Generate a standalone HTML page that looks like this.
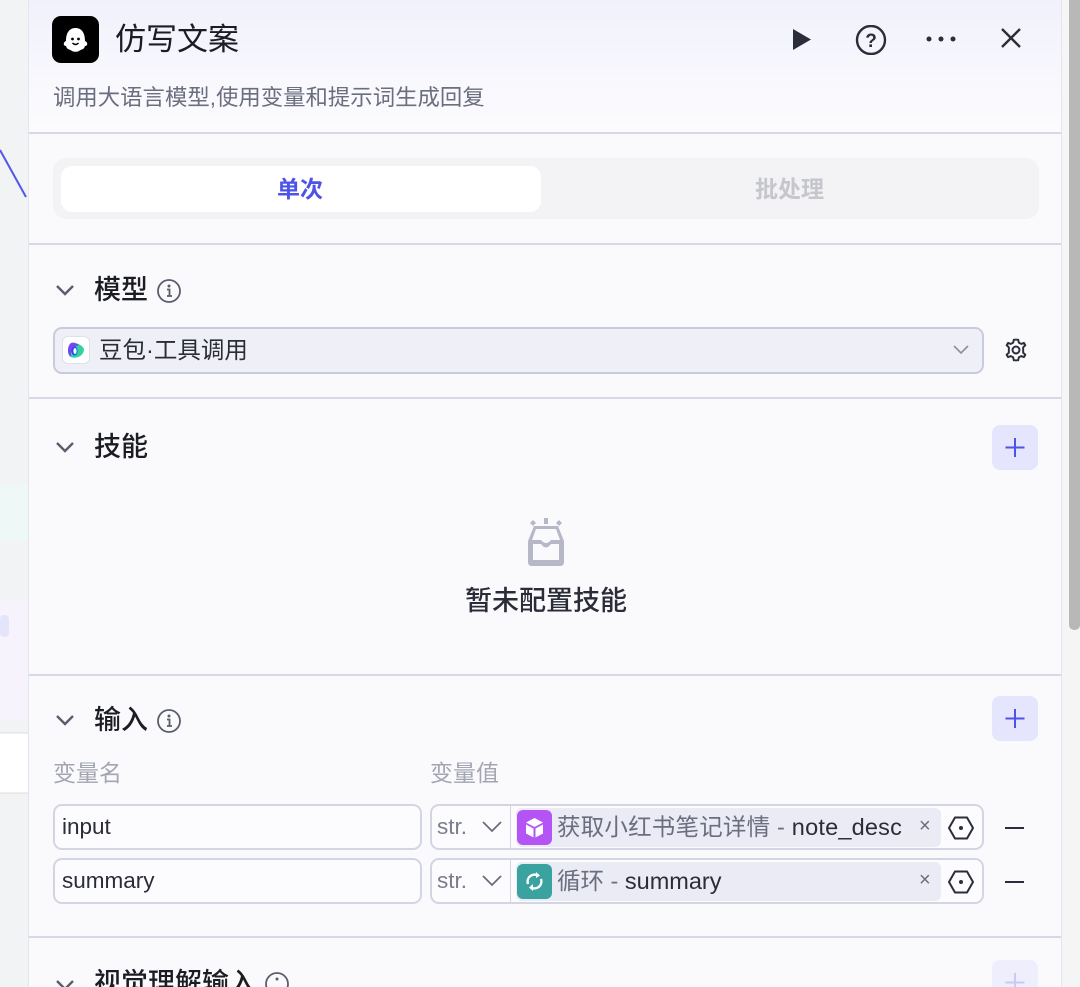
<!DOCTYPE html>
<html><head><meta charset="utf-8"><style>
*{margin:0;padding:0;box-sizing:border-box}
html,body{width:1080px;height:987px;overflow:hidden}
body{background:#f2f3f5;font-family:"Liberation Sans","Noto Sans CJK SC",sans-serif;position:relative;color:#1c1d23}
.a{position:absolute}
.panel{left:28px;top:0;width:1034px;height:987px;background:#fafafd;border-left:1px solid #e4e5ee;border-right:1px solid #e4e5ee;overflow:hidden}
.hd{left:0;top:0;width:1034px;height:132px;background:linear-gradient(#f1f1fc,#fcfcfe)}
.div{height:2px;background:#d6d8e6;width:1034px;left:0}
.t{white-space:nowrap;line-height:1}
.sec{font-size:27px;font-weight:500;color:#1c1d23}
.plus{width:46px;height:45px;background:#e5e6fd;border-radius:8px}
.inp{border:2px solid #d3d5e3;border-radius:9px;background:#fcfcfe;height:46px}
</style></head><body>
<svg class="a" style="left:0;top:0" width="28" height="987"><path d="M0 150 L26 197" stroke="#5458ea" stroke-width="2" fill="none"/>
<rect x="0" y="485" width="28" height="55" fill="#eef8f6"/><rect x="0" y="600" width="28" height="120" fill="#f6f3fc"/><rect x="0" y="615" width="9" height="22" rx="4" fill="#e4e4fb"/>
<rect x="0" y="733" width="28" height="60" fill="#fff"/><line x1="0" y1="733" x2="28" y2="733" stroke="#ddd"/><line x1="0" y1="793" x2="28" y2="793" stroke="#ddd"/></svg>
<div class="a" style="left:1062px;top:0;width:18px;height:987px;background:#f5f5f6"></div>
<div class="a" style="left:1069px;top:-6px;width:11px;height:636px;background:#b8b8b8;border-radius:5px"></div>
<div class="a panel">
 <div class="a hd"></div>
 <div class="a" style="left:23px;top:16px;width:47px;height:47px;background:#000;border-radius:9px"></div>
 <svg class="a" style="left:23px;top:16px" width="47" height="47" viewBox="0 0 47 47"><path d="M14 30 C11 30 11 26 14 25 C14 16 18 12 23.5 12 C29 12 33 16 33 25 C36 26 36 30 33 30 C32 34 29 33 27 35 C25 36 22 36 20 35 C18 33 15 34 14 30Z" fill="#fff"/><circle cx="20.5" cy="23" r="1.4" fill="#000"/><circle cx="26.5" cy="23" r="1.4" fill="#000"/><path d="M20.5 27 Q23.5 30 26.5 27" stroke="#000" stroke-width="1.5" fill="none"/></svg>
 <div class="a t" style="left:86px;top:24px;font-size:31px;color:#1c1d23">仿写文案</div>
 <svg class="a" style="left:760px;top:25px" width="270" height="30"><path d="M4 4 L22 14.5 L4 25Z" fill="#2b2d3a"/>
 <circle cx="82" cy="15" r="14" stroke="#2b2d3a" stroke-width="2.4" fill="none"/><text x="82" y="22" text-anchor="middle" font-size="19" font-weight="700" fill="#2b2d3a" font-family="Liberation Sans">?</text>
 <circle cx="140" cy="14" r="2.5" fill="#2b2d3a"/><circle cx="152" cy="14" r="2.5" fill="#2b2d3a"/><circle cx="164" cy="14" r="2.5" fill="#2b2d3a"/>
 <path d="M213 4 L231 22 M231 4 L213 22" stroke="#2b2d3a" stroke-width="2.4"/></svg>
 <div class="a t" style="left:24px;top:87px;font-size:22.4px;color:#6b6e7f">调用大语言模型,使用变量和提示词生成回复</div>
 <div class="a div" style="top:132px"></div>
 <div class="a" style="left:24px;top:158px;width:986px;height:61px;background:#f3f3f5;border-radius:13px"></div>
 <div class="a" style="left:32px;top:166px;width:480px;height:46px;background:#fff;border-radius:11px"></div>
 <div class="a t" style="left:248px;top:178px;font-size:23px;font-weight:700;color:#4d53e8">单次</div>
 <div class="a t" style="left:726px;top:178px;font-size:23px;font-weight:700;color:#c6c7cc">批处理</div>
 <div class="a div" style="top:243px"></div>
 <!-- model -->
 <svg class="a" style="left:26px;top:282px" width="20" height="16"><path d="M2 4 L10 12 L18 4" stroke="#5a5d6c" stroke-width="2.4" fill="none"/></svg>
 <div class="a t sec" style="left:65px;top:277px">模型</div>
 <svg class="a" style="left:127px;top:278px" width="26" height="26"><circle cx="13" cy="13" r="11" stroke="#5a5d6c" stroke-width="1.8" fill="none"/><circle cx="13" cy="8" r="1.5" fill="#5a5d6c"/><path d="M11 11.5 H13.5 V18 M11 18 H16" stroke="#5a5d6c" stroke-width="1.8" fill="none"/></svg>
 <div class="a" style="left:24px;top:327px;width:931px;height:47px;background:#eff0f7;border:2px solid #c9cbdc;border-radius:9px"></div>
 <div class="a" style="left:33px;top:336px;width:28px;height:28px;background:#fff;border-radius:6px;border:1px solid #e0e0ea"></div>
 <svg class="a" style="left:36px;top:339px" width="22" height="22"><path d="M6 4 C2 7 2 16 6 18 C10 20 18 18 19 11 C19 7 12 3 6 4Z" fill="#35d0a0"/><path d="M6 4 C2 7 2 16 6 18 C5 12 9 8 14 6 C11 4 8 3 6 4Z" fill="#7b45f5"/><ellipse cx="9.5" cy="12" rx="3" ry="4.5" fill="#1d4ff0"/><ellipse cx="10" cy="12" rx="1.6" ry="3" fill="#fff"/></svg>
 <div class="a t" style="left:70px;top:339px;font-size:23.5px;color:#2a2c38">豆包·工具调用</div>
 <svg class="a" style="left:923px;top:344px" width="18" height="12"><path d="M2 2 L9 9 L16 2" stroke="#8b8e9c" stroke-width="1.6" fill="none"/></svg>
 <svg class="a" style="left:974px;top:337px" width="26" height="26" viewBox="0 0 24 24"><path d="M12 2.5 L14 2.5 L14.6 5.2 L16.8 6.4 L19.3 5.4 L20.6 7.6 L18.6 9.5 L18.6 12 L18.6 14.5 L20.6 16.4 L19.3 18.6 L16.8 17.6 L14.6 18.8 L14 21.5 L10 21.5 L9.4 18.8 L7.2 17.6 L4.7 18.6 L3.4 16.4 L5.4 14.5 L5.4 9.5 L3.4 7.6 L4.7 5.4 L7.2 6.4 L9.4 5.2 L10 2.5Z" stroke="#2b2d3a" stroke-width="1.8" fill="none" stroke-linejoin="round"/><circle cx="12" cy="12" r="3.2" stroke="#2b2d3a" stroke-width="1.8" fill="none"/></svg>
 <div class="a div" style="top:397px"></div>
 <!-- skills -->
 <svg class="a" style="left:26px;top:439px" width="20" height="16"><path d="M2 4 L10 12 L18 4" stroke="#5a5d6c" stroke-width="2.4" fill="none"/></svg>
 <div class="a t sec" style="left:65px;top:434px">技能</div>
 <div class="a plus" style="left:963px;top:425px"></div>
 <svg class="a" style="left:963px;top:425px" width="46" height="45"><path d="M23 13 V32 M13.5 22.5 H32.5" stroke="#4d53e8" stroke-width="2"/></svg>
 <svg class="a" style="left:489px;top:516px" width="56" height="54" viewBox="0 0 56 54"><path d="M10 25 L16 10 H40 L46 25 V46 Q46 50 42 50 H14 Q10 50 10 46Z" fill="#b6b8c8"/><path d="M15 28 H23 Q28 35 33 28 H41 V44 H15Z" fill="#fafafd"/><path d="M18 13 H38 L42 24 H33 Q28 30 23 24 H14Z" fill="#fafafd"/><rect x="26" y="2" width="4" height="6" fill="#b6b8c8"/><path d="M12 7 L15 4 L18 7 L15 10Z" fill="#b6b8c8"/><path d="M38 7 L41 4 L44 7 L41 10Z" fill="#b6b8c8"/></svg>
 <div class="a t" style="left:436px;top:588px;font-size:27px;font-weight:500;color:#2a2c38">暂未配置技能</div>
 <div class="a div" style="top:674px"></div>
 <!-- input -->
 <svg class="a" style="left:26px;top:712px" width="20" height="16"><path d="M2 4 L10 12 L18 4" stroke="#5a5d6c" stroke-width="2.4" fill="none"/></svg>
 <div class="a t sec" style="left:65px;top:707px">输入</div>
 <svg class="a" style="left:127px;top:708px" width="26" height="26"><circle cx="13" cy="13" r="11" stroke="#5a5d6c" stroke-width="1.8" fill="none"/><circle cx="13" cy="8" r="1.5" fill="#5a5d6c"/><path d="M11 11.5 H13.5 V18 M11 18 H16" stroke="#5a5d6c" stroke-width="1.8" fill="none"/></svg>
 <div class="a plus" style="left:963px;top:696px"></div>
 <svg class="a" style="left:963px;top:696px" width="46" height="45"><path d="M23 13 V32 M13.5 22.5 H32.5" stroke="#4d53e8" stroke-width="2"/></svg>
 <div class="a t" style="left:24px;top:762px;font-size:23px;color:#a3a5b2">变量名</div>
 <div class="a t" style="left:401px;top:762px;font-size:23px;color:#a3a5b2">变量值</div>

 <div class="a inp" style="left:24px;top:804px;width:369px"></div>
 <div class="a t" style="left:33px;top:816px;font-size:22.5px;color:#2a2c38">input</div>
 <div class="a inp" style="left:401px;top:804px;width:554px"></div>
 <div class="a t" style="left:408px;top:816px;font-size:22.5px;color:#7a7d8c">str.</div>
 <svg class="a" style="left:452px;top:820px" width="22" height="14"><path d="M2 2 L11 11 L20 2" stroke="#6a6d7c" stroke-width="1.8" fill="none"/></svg>
 <div class="a" style="left:481px;top:806px;width:1px;height:42px;background:#d3d5e3"></div>
 <div class="a" style="left:487px;top:808px;width:425px;height:39px;background:#ebebf5;border-radius:6px"></div>
 <div class="a" style="left:488px;top:810px;width:35px;height:35px;background:#b454f4;border-radius:6px"></div>
 <svg class="a" style="left:488px;top:810px" width="35" height="35"><path d="M17.5 8 L26 12.5 L17.5 17 L9 12.5Z" fill="#fff"/><path d="M9 14.5 L16.5 18.5 V27.5 L9 23.5Z" fill="#fff"/><path d="M26 14.5 L18.5 18.5 V27.5 L26 23.5Z" fill="#fff"/></svg>
 <div class="a t" style="left:528px;top:816px;font-size:23.5px;color:#6b6e7f;letter-spacing:0.2px">获取小红书笔记详情 - <span style="color:#2a2c38">note_desc</span></div>
 <div class="a t" style="left:890px;top:816px;font-size:20px;color:#6b6e7f">×</div>
 <svg class="a" style="left:918px;top:814px" width="28" height="28"><path d="M8 3.5 H20 L26 14 L20 24.5 H8 L2 14Z" stroke="#2b2d3a" stroke-width="2" fill="none" stroke-linejoin="round"/><circle cx="14" cy="14" r="2" fill="#2b2d3a"/></svg>
 <div class="a" style="left:976px;top:827px;width:19px;height:2px;background:#2b2d3a"></div>

 <div class="a inp" style="left:24px;top:858px;width:369px"></div>
 <div class="a t" style="left:33px;top:870px;font-size:22.5px;color:#2a2c38">summary</div>
 <div class="a inp" style="left:401px;top:858px;width:554px"></div>
 <div class="a t" style="left:408px;top:870px;font-size:22.5px;color:#7a7d8c">str.</div>
 <svg class="a" style="left:452px;top:874px" width="22" height="14"><path d="M2 2 L11 11 L20 2" stroke="#6a6d7c" stroke-width="1.8" fill="none"/></svg>
 <div class="a" style="left:481px;top:860px;width:1px;height:42px;background:#d3d5e3"></div>
 <div class="a" style="left:487px;top:862px;width:425px;height:39px;background:#ebebf5;border-radius:6px"></div>
 <div class="a" style="left:488px;top:864px;width:35px;height:35px;background:#3aa3a0;border-radius:6px"></div>
 <svg class="a" style="left:488px;top:864px" width="35" height="35"><path d="M11 20 A7 7 0 0 1 21 11.5 M24 15 A7 7 0 0 1 14 23.5" stroke="#fff" stroke-width="2.4" fill="none"/><path d="M19 8 L23 11.5 L19 14Z M16 27 L12 23.5 L16 20Z" fill="#fff"/></svg>
 <div class="a t" style="left:528px;top:870px;font-size:23.5px;color:#6b6e7f">循环 - <span style="color:#2a2c38">summary</span></div>
 <div class="a t" style="left:890px;top:870px;font-size:20px;color:#6b6e7f">×</div>
 <svg class="a" style="left:918px;top:868px" width="28" height="28"><path d="M8 3.5 H20 L26 14 L20 24.5 H8 L2 14Z" stroke="#2b2d3a" stroke-width="2" fill="none" stroke-linejoin="round"/><circle cx="14" cy="14" r="2" fill="#2b2d3a"/></svg>
 <div class="a" style="left:976px;top:881px;width:19px;height:2px;background:#2b2d3a"></div>

 <div class="a div" style="top:936px"></div>
 <svg class="a" style="left:26px;top:977px" width="20" height="16"><path d="M2 4 L10 12 L18 4" stroke="#5a5d6c" stroke-width="2.4" fill="none"/></svg>
 <div class="a t sec" style="left:65px;top:970px">视觉理解输入</div>
 <svg class="a" style="left:235px;top:971px" width="26" height="26"><circle cx="13" cy="13" r="11" stroke="#5a5d6c" stroke-width="1.8" fill="none"/><circle cx="13" cy="8" r="1.5" fill="#5a5d6c"/></svg>
 <div class="a plus" style="left:963px;top:960px;background:#eeeefc"></div>
 <svg class="a" style="left:963px;top:960px" width="46" height="45"><path d="M23 13 V32 M13.5 22.5 H32.5" stroke="#c9cbf6" stroke-width="2"/></svg>
</div>
</body></html>
